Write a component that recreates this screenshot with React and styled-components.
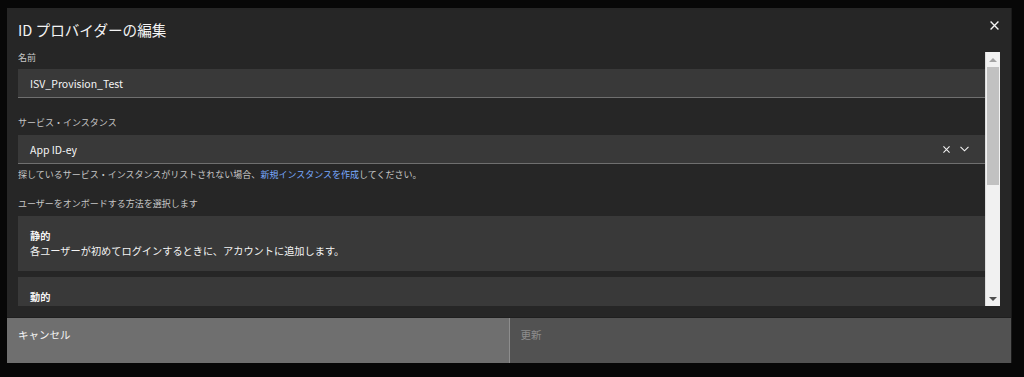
import React from "react";
import styled, { createGlobalStyle } from "styled-components";

const GlobalStyle = createGlobalStyle`
  html, body {
    margin: 0;
    padding: 0;
    background: #070707;
  }
  body {
    font-family: "Noto Sans CJK JP", "Noto Sans", sans-serif;
    -webkit-font-smoothing: antialiased;
  }
`;

const Overlay = styled.div`
  width: 1024px;
  height: 377px;
  box-sizing: border-box;
  padding: 8px 13px 14px 7px;
  display: flex;
`;

const Modal = styled.div`
  position: relative;
  flex: 1;
  display: flex;
  flex-direction: column;
  background: #262626;
  box-shadow: 1px 0 0 #1a1a1a;
`;

const Header = styled.div`
  padding: 12px 11px 12px 11px;
`;

const Title = styled.h2`
  margin: 0;
  font-size: 14.6px;
  line-height: 20px;
  font-weight: 400;
  color: #f4f4f4;
`;

const CloseButton = styled.button`
  position: absolute;
  top: 0;
  right: 0;
  width: 34px;
  height: 34px;
  padding: 0;
  border: none;
  background: transparent;
  display: flex;
  align-items: center;
  justify-content: center;
  color: #f4f4f4;
`;

const BodyFrame = styled.div`
  height: 254px;
  margin: 0 11px 11px 11px;
  display: flex;
`;

const Body = styled.div`
  flex: 1;
  overflow: hidden;
`;

const ScrollBar = styled.div`
  width: 15px;
  flex-shrink: 0;
  display: flex;
  flex-direction: column;
  background: #f1f1f1;
  box-shadow: inset 1px 0 0 #dcdcdc;
`;

const ScrollButton = styled.div`
  height: 15px;
  display: flex;
  align-items: center;
  justify-content: center;
`;

const Arrow = styled.div`
  width: 0;
  height: 0;
  border-left: 4px solid transparent;
  border-right: 4px solid transparent;
  ${(p) =>
    p.$down
      ? `border-top: 4px solid #505050;`
      : `border-bottom: 4px solid #a3a3a3;`}
`;

const Thumb = styled.div`
  height: 118px;
  margin: 0 1px 0 2px;
  background: #c1c1c1;
`;

const Track = styled.div`
  flex: 1;
`;

const Field = styled.div`
  display: flex;
  flex-direction: column;
  margin-bottom: ${(p) => p.$gap || 0}px;
`;

const Label = styled.label`
  font-size: 9px;
  line-height: 12px;
  color: #c6c6c6;
  margin-bottom: ${(p) => p.$mb || 5}px;
`;

const InputBox = styled.div`
  height: 28px;
  background: #393939;
  border-bottom: 1px solid #6f6f6f;
  display: flex;
  align-items: center;
  padding: 0 12px;
  font-size: 10.5px;
  color: #f4f4f4;
`;

const Value = styled.span`
  flex: 1;
`;

const IconGroup = styled.div`
  display: flex;
  align-items: center;
  gap: 10px;
  margin-right: 4px;
`;

const Helper = styled.div`
  margin-top: 5px;
  font-size: 9px;
  line-height: 12px;
  color: #c6c6c6;
`;

const Link = styled.a`
  color: #78a9ff;
  text-decoration: none;
`;

const Tiles = styled.div`
  display: flex;
  flex-direction: column;
  gap: 6px;
`;

const Tile = styled.div`
  background: #393939;
  padding: 12px 12px 13px 12px;
  color: #f4f4f4;
  font-size: 10.2px;
  line-height: 15px;
`;

const TileTitle = styled.div`
  font-weight: 700;
`;

const Footer = styled.div`
  display: flex;
  height: 46px;
  border-top: 1px solid #1f1f1f;
`;

const FooterButton = styled.button`
  flex: 1;
  border: none;
  margin: 0;
  padding: 10px 11px;
  text-align: left;
  align-self: stretch;
  display: flex;
  align-items: flex-start;
  font-family: inherit;
  font-size: 10.5px;
  line-height: 14px;
  background: ${(p) => (p.$primary ? "#525252" : "#6f6f6f")};
  color: ${(p) => (p.$disabled ? "#8d8d8d" : "#f4f4f4")};
  & + & {
    border-left: 1px solid #8d8d8d;
  }
`;

const XIcon = ({ size = 8, stroke = "#f4f4f4" }) => (
  <svg width={size} height={size} viewBox="0 0 8 8">
    <path d="M0.5 0.5 L7.5 7.5 M7.5 0.5 L0.5 7.5" stroke={stroke} strokeWidth="1.2" />
  </svg>
);

const Chevron = () => (
  <svg width="9" height="6" viewBox="0 0 9 6">
    <path d="M0.5 0.8 L4.5 4.8 L8.5 0.8" stroke="#f4f4f4" strokeWidth="1.1" fill="none" />
  </svg>
);

export default function App() {
  return (
    <>
      <GlobalStyle />
      <Overlay>
        <Modal>
          <Header>
            <Title>ID プロバイダーの編集</Title>
          </Header>
          <CloseButton aria-label="閉じる">
            <XIcon size={9} />
          </CloseButton>
          <BodyFrame>
            <Body>
              <Field $gap={19}>
                <Label>名前</Label>
                <InputBox>
                  <Value>ISV_Provision_Test</Value>
                </InputBox>
              </Field>
              <Field $gap={17}>
                <Label $mb={6}>サービス・インスタンス</Label>
                <InputBox>
                  <Value>App ID-ey</Value>
                  <IconGroup>
                    <XIcon size={7} />
                    <Chevron />
                  </IconGroup>
                </InputBox>
                <Helper>
                  探しているサービス・インスタンスがリストされない場合、
                  <Link>新規インスタンスを作成</Link>してください。
                </Helper>
              </Field>
              <Field $gap={19}>
                <Label $mb={6}>ユーザーをオンボードする方法を選択します</Label>
                <Tiles>
                  <Tile>
                    <TileTitle>静的</TileTitle>
                    <div>各ユーザーが初めてログインするときに、アカウントに追加します。</div>
                  </Tile>
                  <Tile>
                    <TileTitle>動的</TileTitle>
                    <div>ユーザーの属性に基づいて、ログインのたびにアクセスを割り当てます。</div>
                  </Tile>
                </Tiles>
              </Field>
            </Body>
            <ScrollBar>
              <ScrollButton>
                <Arrow />
              </ScrollButton>
              <Thumb />
              <Track />
              <ScrollButton>
                <Arrow $down />
              </ScrollButton>
            </ScrollBar>
          </BodyFrame>
          <Footer>
            <FooterButton>キャンセル</FooterButton>
            <FooterButton $primary $disabled>
              更新
            </FooterButton>
          </Footer>
        </Modal>
      </Overlay>
    </>
  );
}
